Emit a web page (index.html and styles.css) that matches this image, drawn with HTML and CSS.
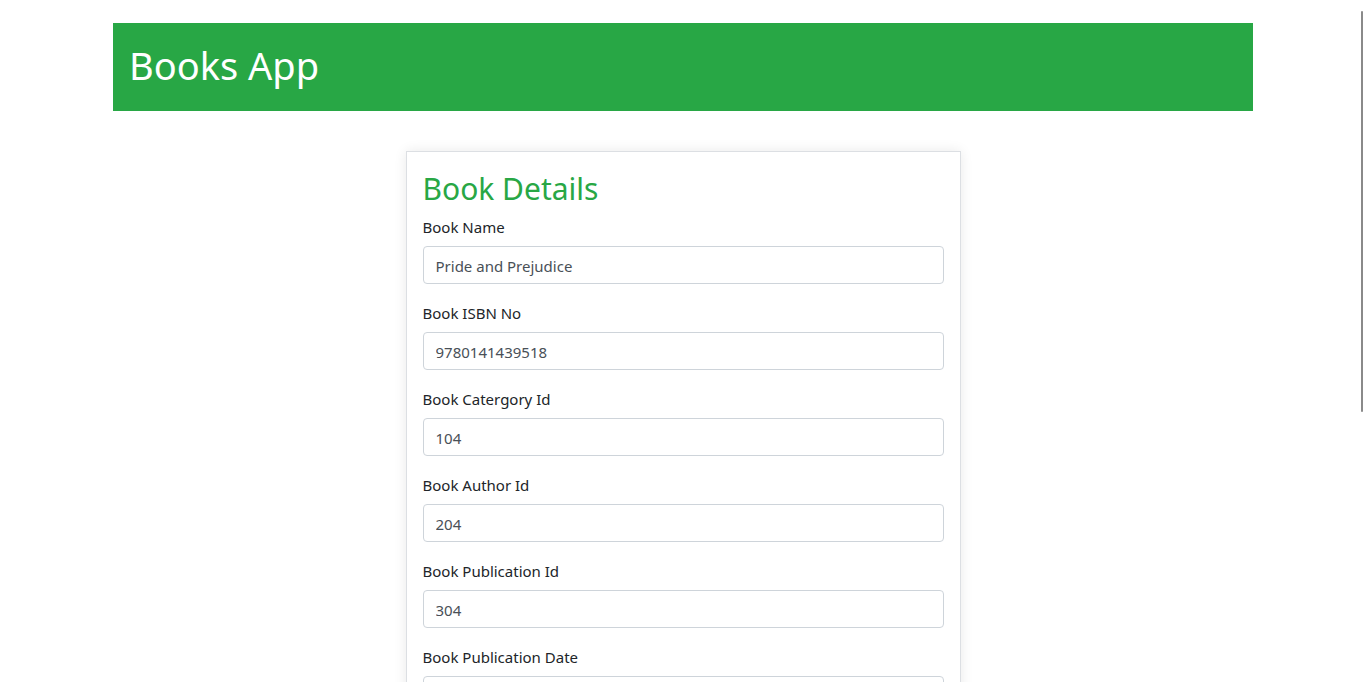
FILE: index.html
```html
<!DOCTYPE html>
<html lang="en">
<head>
<meta charset="utf-8">
<title>Books App</title>
<link rel="stylesheet" href="styles.css">
</head>
<body>
<div class="container">
  <header class="app-header">
    <h1 class="app-title">Books App</h1>
  </header>
  <main class="card">
    <h2 class="card-title">Book Details</h2>
    <form class="book-form">
      <div class="form-group">
        <label class="form-label">Book Name</label>
        <input class="form-control" type="text" value="Pride and Prejudice">
      </div>
      <div class="form-group">
        <label class="form-label">Book ISBN No</label>
        <input class="form-control" type="text" value="9780141439518">
      </div>
      <div class="form-group">
        <label class="form-label">Book Catergory Id</label>
        <input class="form-control" type="text" value="104">
      </div>
      <div class="form-group">
        <label class="form-label">Book Author Id</label>
        <input class="form-control" type="text" value="204">
      </div>
      <div class="form-group">
        <label class="form-label">Book Publication Id</label>
        <input class="form-control" type="text" value="304">
      </div>
      <div class="form-group">
        <label class="form-label">Book Publication Date</label>
        <input class="form-control" type="text" value="1813-01-28">
      </div>
    </form>
  </main>
</div>
<div class="scroll-thumb"></div>
</body>
</html>
```
FILE: styles.css
```css
html {
  scrollbar-width: none;
}
html::-webkit-scrollbar {
  display: none;
}
body {
  margin: 0;
  font-family: "Noto Sans", "Open Sans", sans-serif;
  font-size: 16px;
  line-height: 1.5;
  color: #212529;
  background: #fff;
}
.container {
  width: 1140px;
  margin: 0 auto;
  padding-top: 23px;
}
.app-header {
  background: #28a745;
  height: 88px;
  padding: 0 16px 4px;
  display: flex;
  align-items: center;
  box-sizing: border-box;
}
.app-title {
  margin: 0;
  color: #fff;
  font-weight: 400;
  font-size: 38px;
  line-height: 48px;
}
.card {
  width: 555px;
  box-sizing: border-box;
  margin: 40px auto 0;
  border: 1px solid #dcdfe3;
  padding: 16px 16px 16px;
  box-shadow: 0 0 12px rgba(0, 0, 0, 0.09);
  background: #fff;
}
.card-title {
  margin: 0 0 8px;
  padding-top: 2px;
  height: 36.4px;
  color: #28a745;
  font-weight: 400;
  font-size: 30px;
  line-height: 38px;
}
.form-group {
  margin-bottom: 16px;
}
.form-label {
  display: block;
  padding-top: 1px;
  margin-bottom: 7px;
  font-size: 15px;
  line-height: 24px;
}
.form-control {
  display: block;
  width: 100%;
  box-sizing: border-box;
  height: 38px;
  padding: 7px 12px 5px;
  font-family: inherit;
  font-size: 15px;
  line-height: 24px;
  color: #495057;
  border: 1px solid #ced4da;
  border-radius: 4px;
  background: #fff;
}
.scroll-thumb {
  position: fixed;
  right: 3px;
  top: 11px;
  width: 2px;
  height: 401px;
  background: #8a8a8a;
  border-radius: 1px;
}
```
